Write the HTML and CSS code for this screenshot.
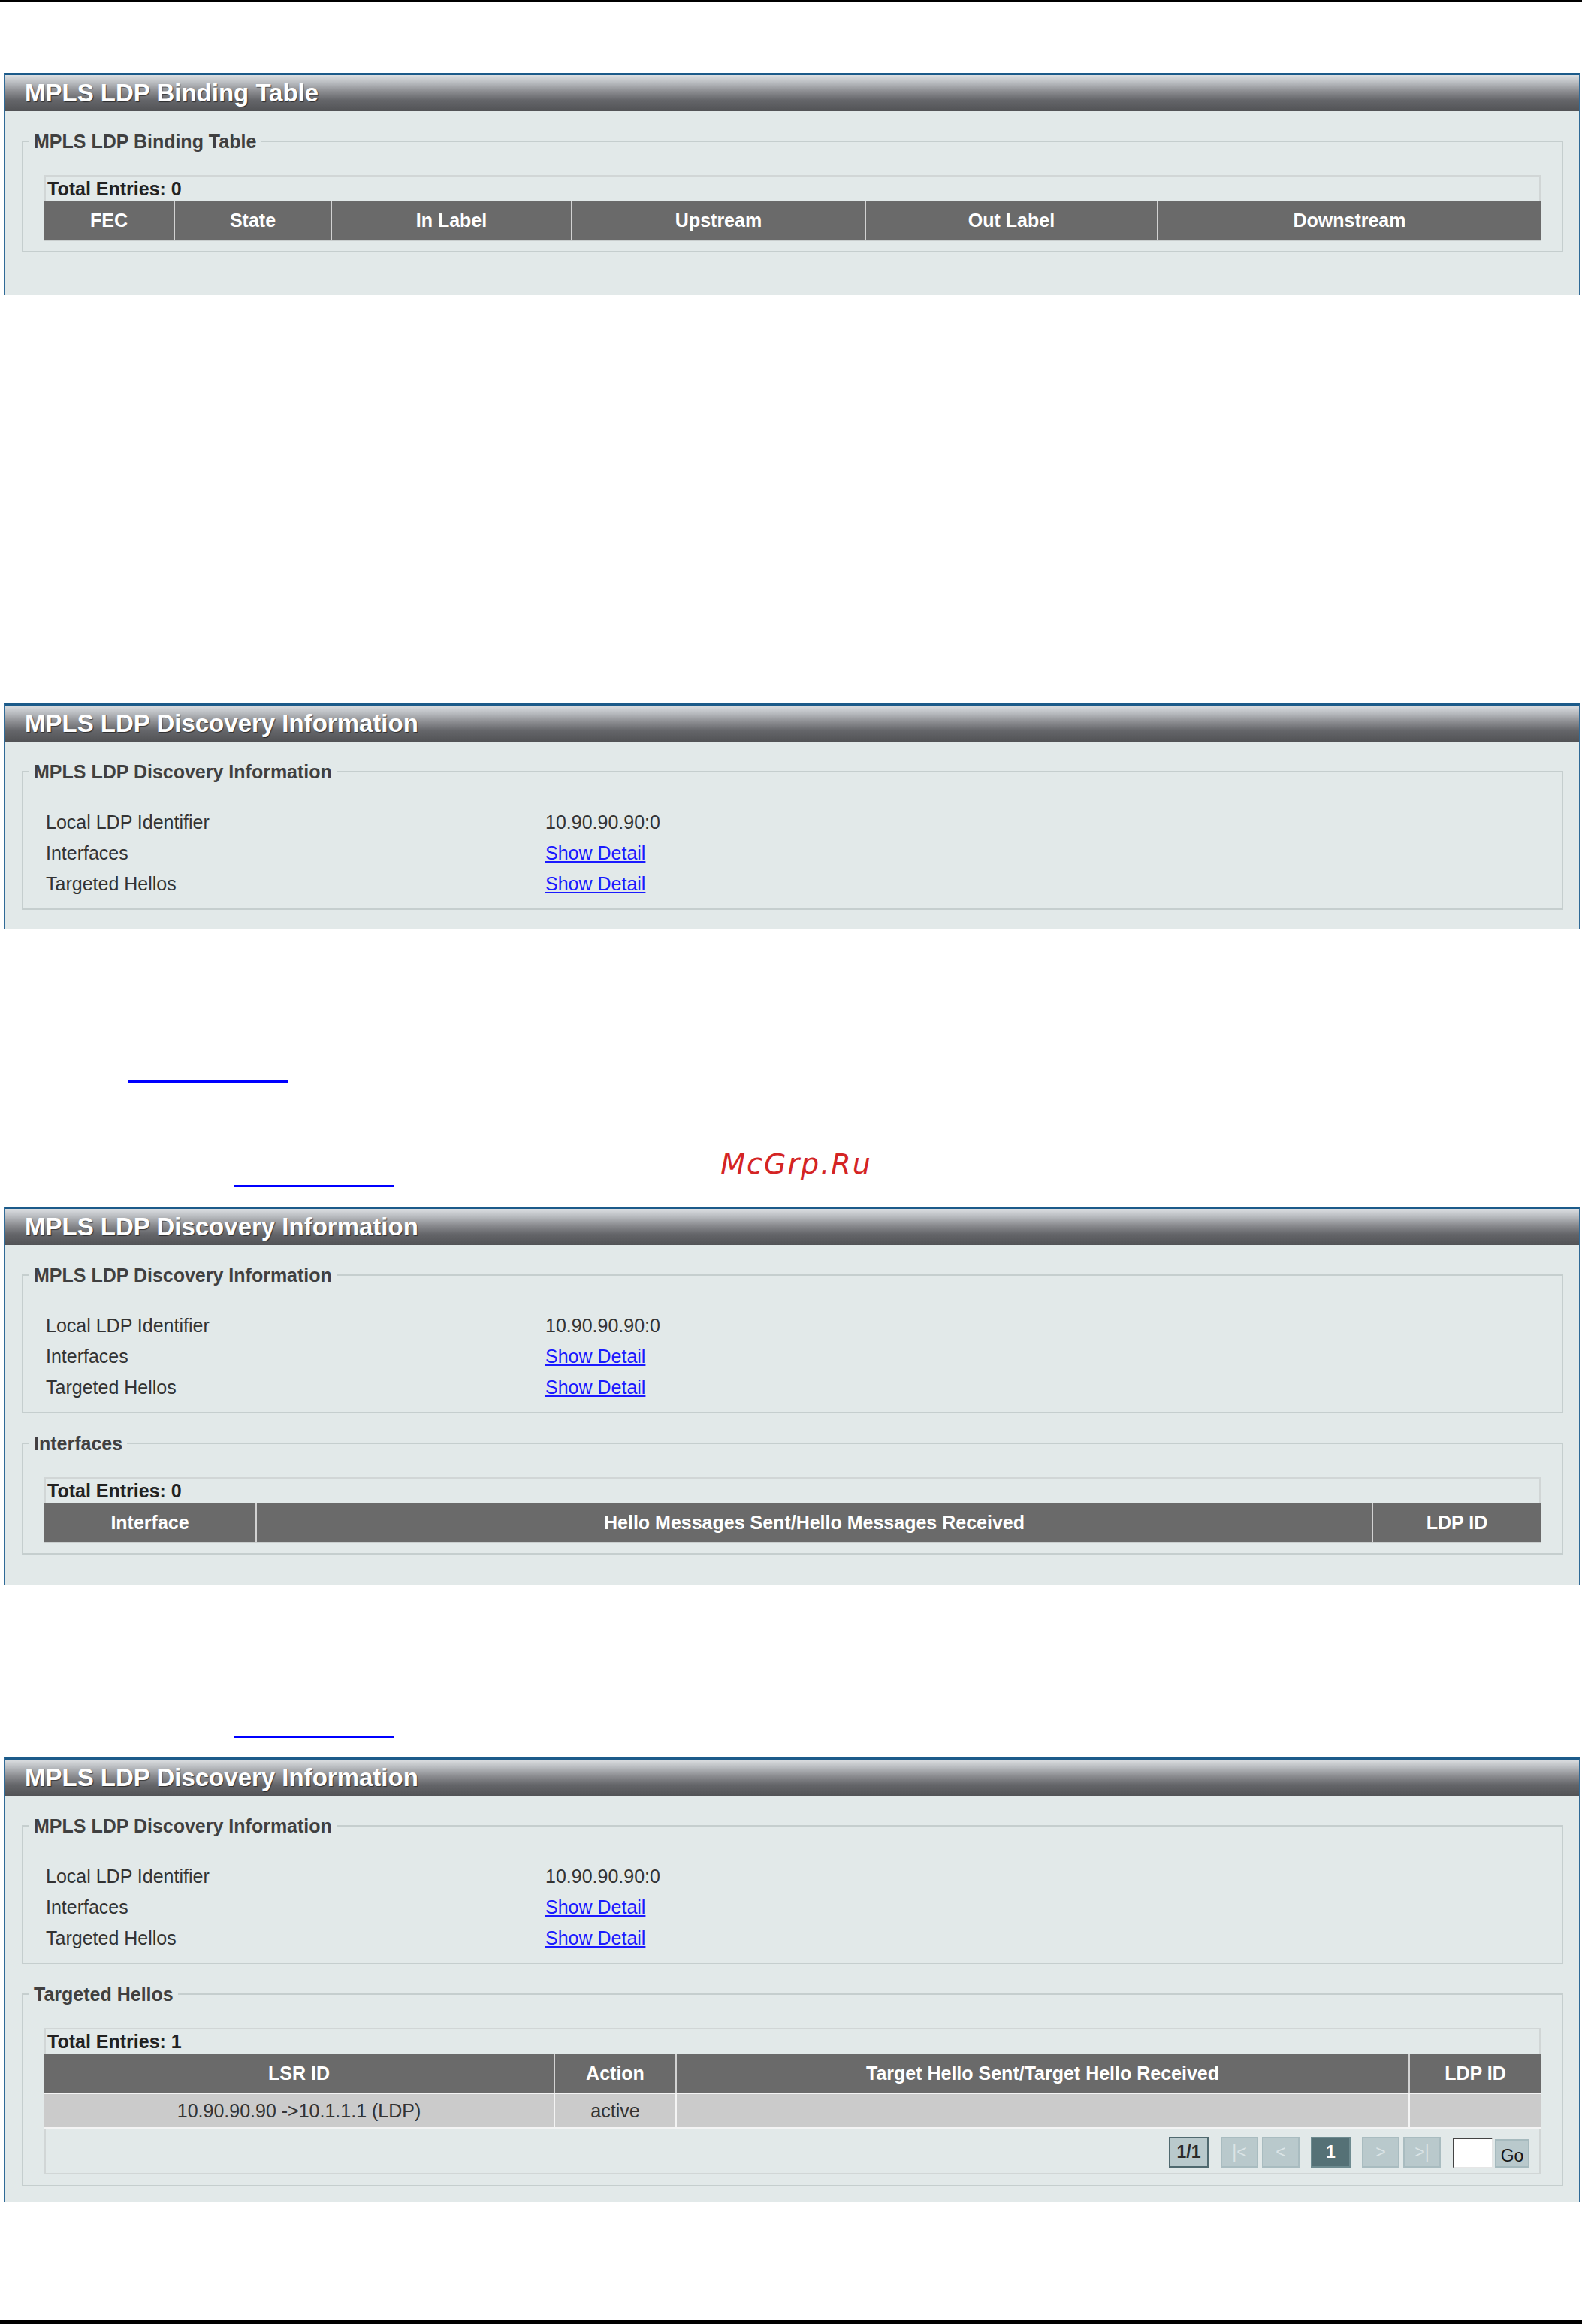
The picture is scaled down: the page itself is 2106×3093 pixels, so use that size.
FILE: index.html
```html
<!DOCTYPE html>
<html lang="en">
<head>
<meta charset="utf-8">
<title>MPLS LDP Binding Table / Discovery Information</title>
<link rel="stylesheet" href="styles.css">
</head>
<body>
<main class="page">
  <div class="rule-black rule-top"></div>

  <section class="panel panel-binding">
    <h2 class="panel-head">MPLS LDP Binding Table</h2>
    <div class="panel-body">
      <fieldset class="group">
        <legend class="group-title">MPLS LDP Binding Table</legend>
        <div class="group-content table-content">
          <div class="dtable">
            <div class="dtable-total">Total Entries: 0</div>
            <div class="dtable-head cols-binding">
              <div class="cell">FEC</div>
              <div class="cell">State</div>
              <div class="cell">In Label</div>
              <div class="cell">Upstream</div>
              <div class="cell">Out Label</div>
              <div class="cell">Downstream</div>
            </div>
          </div>
        </div>
      </fieldset>
    </div>
  </section>

  <section class="panel panel-disc-a">
    <h2 class="panel-head">MPLS LDP Discovery Information</h2>
    <div class="panel-body">
      <fieldset class="group">
        <legend class="group-title">MPLS LDP Discovery Information</legend>
        <div class="group-content info-content">
          <div class="info-row"><span class="info-label">Local LDP Identifier</span><span class="info-value">10.90.90.90:0</span></div>
          <div class="info-row"><span class="info-label">Interfaces</span><a class="info-link" href="#">Show Detail</a></div>
          <div class="info-row"><span class="info-label">Targeted Hellos</span><a class="info-link" href="#">Show Detail</a></div>
        </div>
      </fieldset>
    </div>
  </section>

  <div class="doc-rule doc-rule-a"></div>
  <div class="watermark">McGrp.Ru</div>
  <div class="doc-rule doc-rule-b"></div>

  <section class="panel panel-disc-b">
    <h2 class="panel-head">MPLS LDP Discovery Information</h2>
    <div class="panel-body">
      <fieldset class="group">
        <legend class="group-title">MPLS LDP Discovery Information</legend>
        <div class="group-content info-content">
          <div class="info-row"><span class="info-label">Local LDP Identifier</span><span class="info-value">10.90.90.90:0</span></div>
          <div class="info-row"><span class="info-label">Interfaces</span><a class="info-link" href="#">Show Detail</a></div>
          <div class="info-row"><span class="info-label">Targeted Hellos</span><a class="info-link" href="#">Show Detail</a></div>
        </div>
      </fieldset>
      <fieldset class="group group-next">
        <legend class="group-title">Interfaces</legend>
        <div class="group-content table-content">
          <div class="dtable">
            <div class="dtable-total">Total Entries: 0</div>
            <div class="dtable-head cols-interfaces">
              <div class="cell">Interface</div>
              <div class="cell">Hello Messages Sent/Hello Messages Received</div>
              <div class="cell">LDP ID</div>
            </div>
          </div>
        </div>
      </fieldset>
    </div>
  </section>

  <div class="doc-rule doc-rule-c"></div>

  <section class="panel panel-disc-c">
    <h2 class="panel-head">MPLS LDP Discovery Information</h2>
    <div class="panel-body">
      <fieldset class="group">
        <legend class="group-title">MPLS LDP Discovery Information</legend>
        <div class="group-content info-content">
          <div class="info-row"><span class="info-label">Local LDP Identifier</span><span class="info-value">10.90.90.90:0</span></div>
          <div class="info-row"><span class="info-label">Interfaces</span><a class="info-link" href="#">Show Detail</a></div>
          <div class="info-row"><span class="info-label">Targeted Hellos</span><a class="info-link" href="#">Show Detail</a></div>
        </div>
      </fieldset>
      <fieldset class="group group-next">
        <legend class="group-title">Targeted Hellos</legend>
        <div class="group-content table-content table-content-pager">
          <div class="dtable">
            <div class="dtable-total">Total Entries: 1</div>
            <div class="dtable-head cols-targeted">
              <div class="cell">LSR ID</div>
              <div class="cell">Action</div>
              <div class="cell">Target Hello Sent/Target Hello Received</div>
              <div class="cell">LDP ID</div>
            </div>
            <div class="dtable-row cols-targeted">
              <div class="cell">10.90.90.90 -&gt;10.1.1.1 (LDP)</div>
              <div class="cell">active</div>
              <div class="cell"></div>
              <div class="cell"></div>
            </div>
            <div class="pager">
              <span class="pg pg-count">1/1</span>
              <span class="pg pg-nav pg-first">|&lt;</span>
              <span class="pg pg-nav pg-prev">&lt;</span>
              <span class="pg pg-current">1</span>
              <span class="pg pg-nav pg-next">&gt;</span>
              <span class="pg pg-nav pg-last">&gt;|</span>
              <input class="pg-input" type="text" value="">
              <button class="pg-go" type="button">Go</button>
            </div>
          </div>
        </div>
      </fieldset>
    </div>
  </section>

  <div class="rule-black rule-bottom"></div>
</main>
</body>
</html>
```

FILE: styles.css
```css
* { box-sizing: border-box; }

html, body {
  margin: 0;
  padding: 0;
  background: #ffffff;
}

body {
  font-family: "Liberation Sans", Arial, sans-serif;
  color: #333333;
}

.page {
  width: 2106px;
  display: flex;
  flex-direction: column;
  align-items: flex-start;
}

/* page edge rules */
.rule-black {
  width: 2106px;
  background: #000000;
}
.rule-top { height: 3px; }
.rule-bottom { height: 5px; margin-top: 158px; }

/* underline-only document links */
.doc-rule {
  height: 3px;
  width: 213px;
  background: #0000ff;
}
.doc-rule-a { margin-top: 202px; margin-left: 171px; }
.doc-rule-b { margin-top: 6px; margin-left: 311px; }
.doc-rule-c { margin-top: 201px; margin-left: 311px; }

.watermark {
  margin-top: 86px;
  width: 2106px;
  padding-left: 14px;
  text-align: center;
  height: 44px;
  line-height: 44px;
  font-family: "DejaVu Sans", sans-serif;
  font-style: italic;
  font-size: 38px;
  letter-spacing: 2px;
  color: #d42424;
}

/* panels */
.panel {
  margin-left: 5px;
  width: 2099px;
  background: #e2e9e9;
  border-top: 3px solid #1c5b8a;
  border-left: 2px solid #2f6a97;
  border-right: 2px solid #2f6a97;
}
.panel-binding { margin-top: 94px; }
.panel-disc-a { margin-top: 544px; }
.panel-disc-b { margin-top: 26px; }
.panel-disc-c { margin-top: 26px; }

.panel-head {
  margin: 0;
  height: 48px;
  padding-left: 26px;
  display: flex;
  align-items: center;
  font-size: 33px;
  font-weight: bold;
  color: #ffffff;
  text-shadow: 1px 1px 1px rgba(0, 0, 0, 0.55);
  background: linear-gradient(to bottom, #dcdfe2 0%, #b7babe 22%, #8c8d91 45%, #646569 70%, #525356 100%);
}

.panel-body {
  padding: 26px 21px 0 22px;
}
.panel-binding .panel-body { padding-bottom: 56px; }
.panel-disc-a .panel-body { padding-bottom: 25px; }
.panel-disc-b .panel-body { padding-bottom: 40px; }
.panel-disc-c .panel-body { padding-bottom: 20px; }

/* fieldset groups */
.group {
  margin: 0;
  padding: 0 8px;
  min-width: 0;
  border: 2px solid #c5cece;
}
.group-next { margin-top: 26px; }

.group-title {
  padding: 0 6px;
  height: 28px;
  line-height: 28px;
  font-size: 25px;
  font-weight: bold;
  color: #404040;
}

.group-content {
  padding-left: 20px;
  padding-right: 20px;
}

.info-content {
  padding-top: 33px;
  padding-bottom: 12px;
}

.table-content {
  padding-top: 31px;
  padding-bottom: 15px;
}
.table-content-pager { padding-bottom: 14px; }

/* info rows */
.info-row {
  height: 41px;
  display: grid;
  grid-template-columns: 667px 1fr;
  align-items: center;
  font-size: 25px;
  color: #333333;
}
.info-label { padding-left: 2px; }
.info-link {
  color: #1a1aff;
  text-decoration: underline;
  justify-self: start;
}

/* data tables */
.dtable {
  width: 100%;
}

.dtable-total {
  height: 34px;
  line-height: 32px;
  padding-left: 2px;
  border: 2px solid #d1d6d6;
  border-bottom: none;
  font-size: 25px;
  font-weight: bold;
  color: #222222;
}

.dtable-head {
  display: grid;
  height: 52px;
  background: #6a6a6a;
  box-shadow: 0 2px 0 #c9cece;
}

.dtable-head .cell {
  display: flex;
  align-items: center;
  justify-content: center;
  font-size: 25px;
  font-weight: bold;
  color: #ffffff;
  border-left: 2px solid #d2d2d2;
}
.dtable-head .cell:first-child { border-left: none; }

.dtable-row {
  display: grid;
  height: 48px;
  background: #cbcbcb;
  border-top: 2px solid #f4f4f4;
  border-bottom: 2px solid #f4f4f4;
}
.dtable-row .cell {
  display: flex;
  align-items: center;
  justify-content: center;
  font-size: 25px;
  color: #333333;
  border-left: 2px solid #f4f4f4;
}
.dtable-row .cell:first-child { border-left: none; }

.cols-binding { grid-template-columns: 172px 209px 320px 391px 389px 1fr; }
.cols-interfaces { grid-template-columns: 281px 1486px 1fr; }
.cols-targeted { grid-template-columns: 678px 162px 976px 1fr; }

/* pager */
.pager {
  height: 61px;
  display: flex;
  justify-content: flex-end;
  align-items: flex-start;
  padding-top: 11px;
  padding-right: 13px;
  border: 2px solid #d1d6d6;
  border-top: none;
}

.pg {
  height: 41px;
  width: 50px;
  display: flex;
  align-items: center;
  justify-content: center;
  background: #b9c9cc;
  border: 2px solid #a9bcc0;
  font-size: 23px;
}

.pg-count {
  width: 53px;
  border-color: #50696f;
  color: #2a2a2a;
  font-weight: bold;
}

.pg-nav {
  color: #dbe4e6;
}

.pg-first { margin-left: 16px; }
.pg-prev { margin-left: 5px; }
.pg-current {
  width: 53px;
  margin-left: 15px;
  background: #557176;
  border-color: #6e8b90;
  color: #ffffff;
  font-weight: bold;
}
.pg-next { margin-left: 15px; }
.pg-last { margin-left: 5px; }

.pg-input {
  margin: 1px 0 0 16px;
  width: 53px;
  height: 40px;
  padding: 0;
  background: #ffffff;
  border-top: 2px solid #444444;
  border-left: 2px solid #444444;
  border-right: 1px solid #e6e6e6;
  border-bottom: 1px solid #e6e6e6;
}

.pg-go {
  margin: 3px 0 0 3px;
  width: 46px;
  height: 38px;
  padding: 6px 0 0 0;
  background: #b9c9cc;
  border: 2px solid #a6babe;
  font-family: "Liberation Sans", Arial, sans-serif;
  font-size: 23px;
  color: #151515;
}
```
